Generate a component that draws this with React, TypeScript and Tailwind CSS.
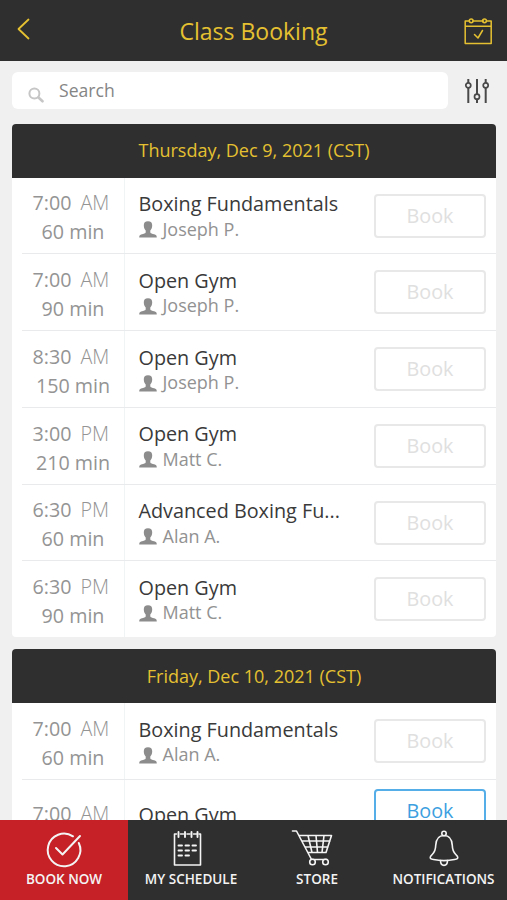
import React from "react";

type Session = { time: string; half: string; mins: number; name: string; coach?: string; open?: boolean };

const thursday: Session[] = [
  { time: "7:00", half: "AM", mins: 60, name: "Boxing Fundamentals", coach: "Joseph P." },
  { time: "7:00", half: "AM", mins: 90, name: "Open Gym", coach: "Joseph P." },
  { time: "8:30", half: "AM", mins: 150, name: "Open Gym", coach: "Joseph P." },
  { time: "3:00", half: "PM", mins: 210, name: "Open Gym", coach: "Matt C." },
  { time: "6:30", half: "PM", mins: 60, name: "Advanced Boxing Fu...", coach: "Alan A." },
  { time: "6:30", half: "PM", mins: 90, name: "Open Gym", coach: "Matt C." },
];

const friday: Session[] = [
  { time: "7:00", half: "AM", mins: 60, name: "Boxing Fundamentals", coach: "Alan A." },
  { time: "7:00", half: "AM", mins: 60, name: "Open Gym", open: true },
];

function Person() {
  return (
    <svg className="mt-[5.500px] h-[17px] w-[18px] shrink-0" viewBox="0 0 18 17" fill="#8c8c8c">
      <path d="M9 .3c2.900 0 4.300 1.500 4.200 4.200-.1 2.400-.8 3.900-1.900 5v1.900c.6 1 2 1.300 3.800 1.800 2 .6 2.700 1.300 2.700 3.300H.2c0-2 .7-2.700 2.700-3.300 1.800-.5 3.200-.8 3.800-1.800V9.500c-1.100-1.100-1.800-2.600-1.900-5C4.700 1.800 6.100.3 9 .3z" />
    </svg>
  );
}

function Row({ s, last }: { s: Session; last: boolean }) {
  return (
    <div className={s.open ? "flex h-[100px]" : last ? "flex h-[75.250px]" : "flex h-[76.750px]"}>
      <div className="w-[10px] shrink-0" />
      <div className={"flex grow " + (last ? "" : "border-b border-[#e8eaeb]")}>
        <div className={"w-[103px] shrink-0 border-r border-[#f1f4f5] text-[19.700px] leading-[29px] text-[#949494] " + (s.open ? "pt-[19px]" : "pt-[10.750px]")}>
          <div className="flex pl-[10.500px]">
            <span className="w-[48px]">{s.time}</span>
            <span className="font-light">{s.half}</span>
          </div>
          {!s.open && <div className="text-center">{s.mins} min</div>}
        </div>
        <div className={"grow pl-[13.500px] " + (s.open ? "pt-[21.500px]" : "pt-[12.500px]")}>
          <div className="text-[19.800px] leading-[28px] whitespace-nowrap text-[#3a3a3a]">{s.name}</div>
          {s.coach && (
            <div className="-mt-[2.500px] flex text-[18px] leading-[27px] text-[#929292]">
              <Person />
              <span className="ml-[6px]">{s.coach}</span>
            </div>
          )}
        </div>
        <div className={"mr-[10px] shrink-0 " + (s.open ? "pt-[9px]" : "pt-[16px]")}>
          <button
            className={
              "flex h-[44px] w-[112px] items-center justify-center rounded-[4px] border-2 text-[19.800px] " +
              (s.open ? "border-[#55aee8] text-[#3d9fe0]" : "border-[#e8e8e8] text-[#e0e0e0]")
            }
          >
            Book
          </button>
        </div>
      </div>
    </div>
  );
}

function Day({ title, list, clipped }: { title: string; list: Session[]; clipped?: boolean }) {
  return (
    <section className="overflow-hidden rounded-[4px] bg-white">
      <h2 className="flex h-[54px] items-center justify-center bg-[#2f2f2f] text-[18px] text-[#e5c131]">{title}</h2>
      {list.map((s, i) => (
        <Row key={i} s={s} last={!clipped && i === list.length - 1} />
      ))}
    </section>
  );
}

const line = { fill: "none", stroke: "currentColor", strokeLinecap: "round", strokeLinejoin: "round" } as const;

function Tab({ label, active, children }: { label: string; active?: boolean; children: React.ReactNode }) {
  return (
    <div className={"flex flex-col items-center pt-[10px] text-[#f4f4f4] " + (active ? "bg-[#c62127]" : "")}>
      <svg className="h-[38px] w-[44px] overflow-visible" viewBox="0 0 44 38" {...line} strokeWidth={1.6}>
        {children}
      </svg>
      <span className="mt-[2.500px] text-[13.500px] leading-[18px] font-semibold whitespace-nowrap">{label}</span>
    </div>
  );
}

export default function App() {
  return (
    <div className="flex h-[900px] w-[507px] flex-col overflow-hidden bg-[#f0f0f0] font-['Open_Sans','Noto_Sans',sans-serif]">
      <header className="flex h-[61.250px] shrink-0 items-center justify-between bg-[#2f2f2f] text-[#e5c131]">
        <svg className="ml-[16px] h-[24px] w-[30px] -translate-y-[2px]" viewBox="0 0 30 24" {...line} strokeWidth={1.8}>
          <path d="M12.500 2.500 2.500 12l10 9.500" />
        </svg>
        <h1 className="-translate-x-[1px] translate-y-[1px] text-[23px]">Class Booking</h1>
        <svg className="mr-[14px] h-[30px] w-[30px]" viewBox="0 0 30 30" {...line} strokeWidth={1.500}>
          <path d="M6 5H2.200v22.500h26V5H24M10 5h10.500M2.200 10.300h26M11.500 18.500l3.500 3.500 4.500-7.500" />
          <circle cx="8.200" cy="4.800" r="1.900" />
          <circle cx="21.500" cy="4.800" r="1.900" />
        </svg>
      </header>

      <div className="flex h-[62.250px] shrink-0 pt-[10.750px] pl-[12px]">
        <div className="flex h-[36.500px] w-[436px] rounded-[6px] bg-white">
          <svg className="mt-[15px] ml-[16px] h-[16px] w-[16px]" viewBox="0 0 16 16" {...line} stroke="#c6c6c6" strokeWidth={2}>
            <circle cx="6.400" cy="6.400" r="5" />
            <path d="M10.500 10.500l4 3.800" strokeWidth={2.600} />
          </svg>
          <span className="ml-[15px] text-[17.600px] leading-[36px] text-[#858585]">Search</span>
        </div>
        <svg className="mt-[6px] ml-[16px] h-[26px] w-[26px]" viewBox="0 0 26 26" {...line} stroke="#494949" strokeWidth={2} strokeLinecap="butt">
          <path d="M4.300 1v4M4.300 10v15M13 1v15M13 21v4M21.700 1v4M21.700 10v15" />
          <circle cx="4.300" cy="7.300" r="2.500" strokeWidth={1.700} />
          <circle cx="13" cy="18.700" r="2.500" strokeWidth={1.700} />
          <circle cx="21.700" cy="7.300" r="2.500" strokeWidth={1.700} />
        </svg>
      </div>

      <main className="flex min-h-0 grow flex-col gap-[12.500px] overflow-hidden pr-[11px] pl-[12px]">
        <div className="shrink-0">
          <Day title="Thursday, Dec 9, 2021 (CST)" list={thursday} />
        </div>
        <div className="shrink-0">
          <Day title="Friday, Dec 10, 2021 (CST)" list={friday} clipped />
        </div>
      </main>

      <nav className="grid h-[80.500px] shrink-0 grid-cols-[128px_126px_126px_127px] bg-[#2f2f2f]">
        <Tab label="BOOK NOW" active>
          <path d="M31 6.300A16.300 16.300 0 1 0 36.800 13M14 18l6.500 6.500L38 6" strokeWidth={2} />
        </Tab>
        <Tab label="MY SCHEDULE">
          <path d="M7.500 4H5.500v31h26v-31h-1.500M11.500 4h3M18 4h3M24.500 4h3" />
          <path d="M9.500 2v5M16 2v5M22.500 2v5M28.500 2v5" strokeWidth={1.900} />
          <path d="M9.500 15.500h3.500M16.500 15.500h3.500M23.500 15.500h3.500M9.500 20.500h3.500M16.500 20.500h3.500M23.500 20.500h3.500M9.500 25.500h3.500M16.500 25.500h3.500" strokeWidth={1.900} />
        </Tab>
        <Tab label="STORE">
          <path d="M-2.500 1h4l15 28.500h15.500M4.500 5.500H36.500L31 22.500H13M7.500 11h27.500M10.500 17h22.500M13 5.500l4 17M21 5.500l1.500 17M29 5.500l-2 17" />
          <circle cx="17.500" cy="32" r="2.800" fill="#2f2f2f" />
          <circle cx="30.500" cy="32" r="2.800" fill="#2f2f2f" />
        </Tab>
        <Tab label="NOTIFICATIONS">
          <path d="M22 5.500c-6 0-8 4-8.300 10C13.500 23 11 23 8.500 26.500c-1 2 .5 2.500 3 3 6 1.300 15 1.300 21 0 2.500-.5 4-1 3-3C33 23 30.500 23 30.300 15.500 30 9.500 28 5.500 22 5.500z" />
          <path d="M18.500 30.500c0 6.500 7 6.500 7 0" />
          <circle cx="22" cy="3.500" r="2.200" fill="#2f2f2f" />
        </Tab>
      </nav>
    </div>
  );
}
